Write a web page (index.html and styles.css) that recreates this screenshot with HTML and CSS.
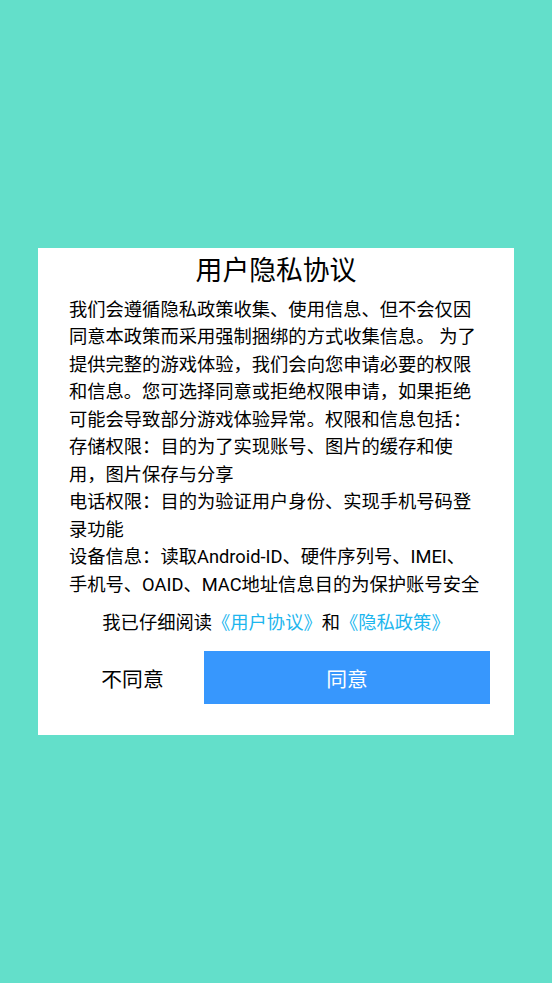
FILE: index.html
```html
<!DOCTYPE html>
<html lang="zh-CN">
<head>
<meta charset="utf-8">
<title>用户隐私协议</title>
<link rel="stylesheet" href="styles.css">
</head>
<body>
<div class="dialog">
  <h1 class="title">用户隐私协议</h1>
  <div class="content">
    <p>我们会遵循隐私政策收集、使用信息、但不会仅因<br>同意本政策而采用强制捆绑的方式收集信息。 为了<br>提供完整的游戏体验，我们会向您申请必要的权限<br>和信息。您可选择同意或拒绝权限申请，如果拒绝<br>可能会导致部分游戏体验异常。权限和信息包括：</p>
    <p>存储权限：目的为了实现账号、图片的缓存和使<br>用，图片保存与分享</p>
    <p>电话权限：目的为验证用户身份、实现手机号码登<br>录功能</p>
    <p>设备信息：读取Android-ID、硬件序列号、IMEI、<br>手机号、OAID、MAC地址信息目的为保护账号安全</p>
  </div>
  <p class="agree">我已仔细阅读<a class="link" href="#">《用户协议》</a>和<a class="link" href="#">《隐私政策》</a></p>
  <div class="actions">
    <button class="btn btn-decline" type="button">不同意</button>
    <button class="btn btn-accept" type="button">同意</button>
  </div>
</div>
</body>
</html>
```
FILE: styles.css
```css
html, body {
  margin: 0;
  padding: 0;
}
body {
  min-height: 100vh;
  background: #63dfca;
  display: flex;
  align-items: center;
  justify-content: center;
  font-family: Roboto, "Noto Sans CJK SC", sans-serif;
  color: #000;
}
.dialog {
  width: 476px;
  background: #fff;
  padding: 4px 0 31px 0;
  box-sizing: border-box;
}
.title {
  margin: 0;
  font-size: 26.8px;
  font-weight: normal;
  line-height: 38px;
  text-align: center;
}
.content {
  margin: 5.5px 0 0 31px;
  font-size: 18.3px;
  line-height: 27.5px;
  white-space: nowrap;
}
.content p {
  margin: 0;
}
.agree {
  margin: 11.75px 0 0 0;
  font-size: 18.3px;
  line-height: 26.5px;
  text-align: center;
  white-space: nowrap;
}
.link {
  color: #1db6ee;
  text-decoration: none;
}
.actions {
  margin-top: 14.75px;
  padding: 0 24px 0 31px;
  display: grid;
  grid-template-columns: 127px 1fr;
  column-gap: 8px;
}
.btn {
  height: 53px;
  border: none;
  margin: 0;
  padding: 0;
  font-family: Roboto, "Noto Sans CJK SC", sans-serif;
  font-size: 20.8px;
  cursor: pointer;
}
.btn-decline {
  background: transparent;
  color: #000;
}
.btn-accept {
  background: #3797fd;
  color: #fff;
}
```
